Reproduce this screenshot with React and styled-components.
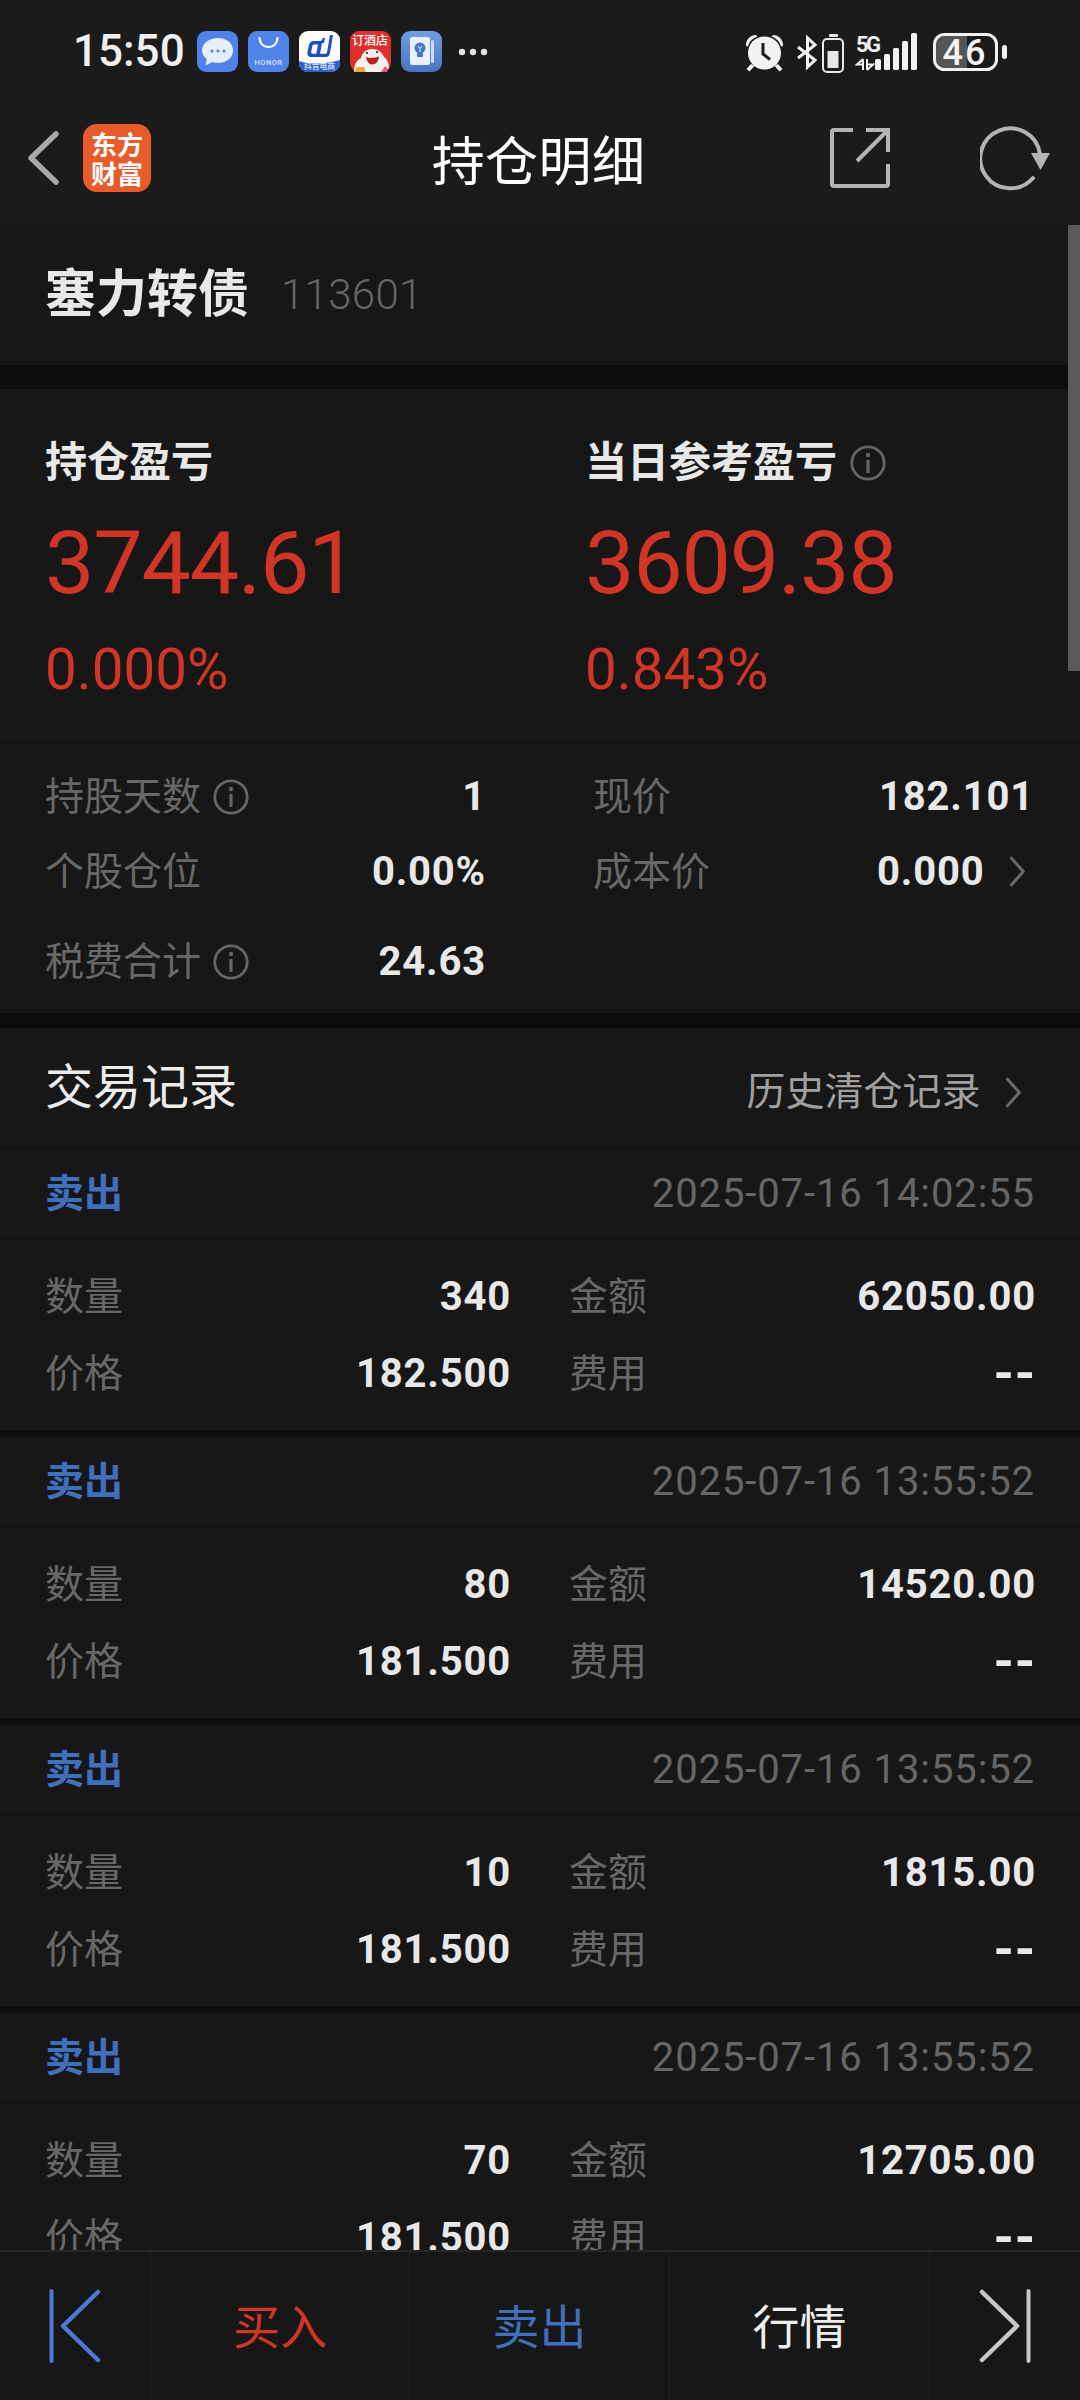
import React from 'react';
import styled, { createGlobalStyle } from 'styled-components';

const Global = createGlobalStyle`
  html, body { margin: 0; padding: 0; background: #171717; }
  * { box-sizing: border-box; }
`;

const sans = `Roboto, "Noto Sans CJK SC", sans-serif`;
const RED = '#d13526';
const BLUE = '#3f70bd';

const Page = styled.div`
  width: 1080px;
  height: 2400px;
  display: flex;
  flex-direction: column;
  overflow: hidden;
  background: #171717;
  font-family: ${sans};
`;

const StatusBar = styled.div`
  height: 102px;
  flex: none;
  display: flex;
  align-items: flex-start;
  justify-content: space-between;
  padding: 31px 72px 0 73px;
  background: #1b1b1b;
`;

const StatusGroup = styled.div`
  display: flex;
  align-items: center;
  height: 41px;
  gap: 10px;
`;

const Clock = styled.span`
  font-size: 44px;
  font-weight: 500;
  line-height: 41px;
  color: #efefef;
  width: 114px;
`;

const Dots = styled.span`
  display: flex;
  margin-left: 6px;
`;

const NavBar = styled.div`
  height: 123px;
  flex: none;
  display: grid;
  grid-template-columns: 1fr auto 1fr;
  align-items: center;
  padding: 0 30px 12px 27px;
  background: #1b1b1b;
`;

const NavLeft = styled.div`
  display: flex;
  align-items: center;
  gap: 24px;
`;

const Logo = styled.div`
  width: 68px;
  height: 68px;
  border-radius: 14px;
  background: #e85c2b;
  color: #fff;
  font-family: "Noto Sans CJK SC", sans-serif;
  font-weight: 700;
  font-size: 26px;
  line-height: 29px;
  text-align: center;
  padding-top: 5px;
`;

const NavTitle = styled.h1`
  margin: 0;
  font-size: 53px;
  font-weight: 400;
  color: #fff;
  font-family: "Noto Sans CJK SC", sans-serif;
  letter-spacing: 0.4px;
  line-height: 70px;
`;

const NavActions = styled.div`
  display: flex;
  align-items: center;
  justify-content: flex-end;
  gap: 90px;
`;

const Scroller = styled.div`
  flex: 1;
  min-height: 0;
  overflow: hidden;
  position: relative;
`;

const ScrollThumb = styled.div`
  position: absolute;
  top: 0;
  right: 0;
  width: 12px;
  height: 446px;
  background: #5a5a5a;
`;

const Band = styled.div`
  height: ${({ $h }) => $h}px;
  background: #0c0c0c;
`;

const StockHead = styled.div`
  height: 140px;
  display: flex;
  align-items: center;
  padding: 0 45px;
  gap: 32px;
`;

const StockName = styled.span`
  font-size: 51px;
  font-weight: 700;
  color: #e8e8e8;
  line-height: 60px;
`;

const StockCode = styled.span`
  font-size: 42px;
  font-weight: 300;
  color: #666;
  letter-spacing: 0.3px;
  line-height: 60px;
`;

const Profit = styled.div`
  display: grid;
  grid-template-columns: 540px 1fr;
  padding: 49px 0 42px 45px;
  border-bottom: 1px solid #0e0e0e;
`;

const ProfitLabel = styled.div`
  display: flex;
  align-items: center;
  gap: 13px;
  font-size: 42px;
  font-weight: 700;
  line-height: 50px;
  color: #e8e8e8;
`;

const ProfitValue = styled.div`
  margin-top: 25px;
  font-size: 88px;
  font-weight: 400;
  line-height: 100px;
  letter-spacing: -1.2px;
  color: ${RED};
`;

const ProfitPct = styled.div`
  margin-top: 27px;
  font-size: 56.5px;
  font-weight: 400;
  line-height: 60px;
  color: ${RED};
`;

const Stats = styled.div`
  padding: 16px 46px 14px 45px;
`;

const StatRow = styled.div`
  display: grid;
  grid-template-columns: 441px 441px;
  column-gap: 107px;
  height: 75px;
  margin-top: ${({ $mt }) => $mt || 0}px;
`;

const Cell = styled.div`
  display: flex;
  align-items: center;
  justify-content: space-between;
`;

const Label = styled.span`
  display: flex;
  align-items: center;
  gap: 12px;
  font-size: 39px;
  color: #686868;
  line-height: 50px;
`;

const Value = styled.span`
  display: flex;
  align-items: center;
  gap: 24px;
  font-size: ${({ $dash }) => ($dash ? 52 : 40)}px;
  font-weight: 700;
  color: #e8e8e8;
  letter-spacing: 0.8px;
  line-height: 50px;
`;

const ChevronBox = styled.span`
  display: flex;
  margin-right: 7px;
`;

const TradeHead = styled.div`
  height: 120px;
  display: flex;
  align-items: center;
  justify-content: space-between;
  padding: 0 50px 0 45px;
`;

const TradeTitle = styled.span`
  font-size: 48px;
  color: #ececec;
  line-height: 60px;
`;

const HistoryLink = styled.span`
  display: flex;
  align-items: center;
  gap: 24px;
  font-size: 39px;
  color: #a0a0a0;
  line-height: 60px;
  padding-top: 8px;
`;

const Card = styled.div`
  border-top: 1px solid #0e0e0e;
`;

const CardHead = styled.div`
  height: 90px;
  display: flex;
  align-items: center;
  justify-content: space-between;
  padding: 0 45px;
  border-bottom: 1px solid #0e0e0e;
`;

const Side = styled.span`
  font-size: 39px;
  font-weight: 700;
  color: ${BLUE};
  line-height: 50px;
  padding-top: 1px;
`;

const Stamp = styled.span`
  font-size: 40px;
  color: #666;
  line-height: 50px;
  letter-spacing: 0.9px;
`;

const CardBody = styled.div`
  padding: 19px 44px 18px 45px;
`;

const CardRow = styled.div`
  display: grid;
  grid-template-columns: 466px 467px;
  column-gap: 58px;
  height: 77px;
`;

const BottomBar = styled.div`
  height: 150px;
  flex: none;
  display: grid;
  grid-template-columns: 150px 259px 260px 260px 151px;
  background: #171717;
  border-top: 2px solid #262626;
`;

const BarItem = styled.div`
  display: flex;
  align-items: center;
  justify-content: center;
  font-size: 47px;
  padding-bottom: ${({ $icon }) => ($icon ? 0 : 5)}px;
  color: ${({ $color }) => $color || '#eee'};
  font-family: "Noto Sans CJK SC", sans-serif;
  border-left: ${({ $first }) => ($first ? 'none' : '1px solid #232323')};
`;

const Chevron = ({ size = 31 }) => (
  <ChevronBox>
    <svg width={size * 0.6} height={size} viewBox="0 0 18 31" fill="none">
      <path d="M3 2l12 13.500L3 29" stroke="#6a6a6a" strokeWidth="3" strokeLinecap="round" strokeLinejoin="round" />
    </svg>
  </ChevronBox>
);

const Info = ({ size = 36, color = '#666' }) => (
  <svg width={size} height={size} viewBox="0 0 36 36" fill="none">
    <circle cx="18" cy="18" r="16.200" stroke={color} strokeWidth="2.800" />
    <circle cx="18" cy="10" r="2.200" fill={color} />
    <rect x="16.400" y="15" width="3.200" height="13" fill={color} />
  </svg>
);

/* notification icons */
const ChatIcon = () => (
  <svg width="41" height="41" viewBox="0 0 41 41">
    <rect width="41" height="41" rx="9" fill="#4f82ea" />
    <path d="M21 7c8.500 0 15 5.200 15 12.500S29.500 32 21 32c-2 0-4-.3-5.700-.9L8.500 34.500l1.300-6.300C7 25.800 5 23 5 19.500 5 12.200 12.500 7 21 7z" fill="#e6eefc" />
    <circle cx="15" cy="20" r="1.600" fill="#5a88e0" />
    <circle cx="21" cy="20" r="1.600" fill="#5a88e0" />
    <circle cx="27" cy="20" r="1.600" fill="#5a88e0" />
  </svg>
);

const HonorIcon = () => (
  <svg width="41" height="41" viewBox="0 0 41 41">
    <rect width="41" height="41" rx="9" fill="#4f82ea" />
    <path d="M11.500 7c.6 6 4.300 9 9 9s8.400-3 9-9" fill="none" stroke="#fff" strokeWidth="2.200" strokeLinecap="round" />
    <text x="20.500" y="34" fontSize="7.500" fontWeight="500" letterSpacing="0.500" textAnchor="middle" fill="#dfe9fb" fontFamily="Roboto, sans-serif">HONOR</text>
  </svg>
);

const ShopIcon = () => (
  <svg width="41" height="41" viewBox="0 0 41 41">
    <rect width="41" height="41" rx="9" fill="#fff" />
    <path d="M0 30c13 4 28 3 41-1v3c0 5-4 9-9 9H9c-5 0-9-4-9-9z" fill="#2c62cf" />
    <path d="M24 7l-2 3h-7c-3 0-4.500 1.500-5 4l-1.500 7c-.6 3 1 5 4 5h14c2.500 0 4-1.500 4.500-4L34 4h-3l-3 17.500c-.2.800-.6 1.200-1.500 1.200H21L23 12h2l1-5z" fill="#1c50c4" />
    <path d="M19 13.500l-1.700 9.200h-3.500c-1.300 0-1.800-.7-1.600-2l1-5.200c.2-1.300.9-2 2-2z" fill="#fff" />
    <text x="20.500" y="38" fontSize="7.800" fontWeight="500" textAnchor="middle" fill="#e6eefc" fontFamily="Noto Sans CJK SC, sans-serif">抖音电商</text>
  </svg>
);

const HotelIcon = () => (
  <svg width="41" height="41" viewBox="0 0 41 41">
    <rect width="41" height="41" rx="9" fill="#dd2f2b" />
    <text x="20" y="14" fontSize="12" fontWeight="500" textAnchor="middle" fill="#fff" fontFamily="Noto Sans CJK SC, sans-serif">订酒店</text>
    <path d="M4 41c0-8 3-12 7-14 1-5 5-9 11-9 6 0 10 3 12 8 3 2 5 6 5 11l-3 4z" fill="#f6f1ef" />
    <path d="M16 26c4 1.200 8 1.200 13-.5-.5 5-3 8-6.500 8S17 31 16 26z" fill="#b8231e" />
    <path d="M4 41l3-5h7l2 5z" fill="#e9a93a" />
    <circle cx="17" cy="22" r="1.100" fill="#222" />
    <circle cx="27" cy="21" r="1.100" fill="#222" />
    <path d="M31 41l4-6 3 3-1 3z" fill="#e85a8a" />
  </svg>
);

const TipsIcon = () => (
  <svg width="41" height="41" viewBox="0 0 41 41">
    <defs>
      <linearGradient id="tipsBg" x1="0" y1="0" x2="0" y2="1">
        <stop offset="0" stopColor="#6f9fe6" />
        <stop offset="1" stopColor="#4a74c2" />
      </linearGradient>
    </defs>
    <rect width="41" height="41" rx="9" fill="url(#tipsBg)" />
    <rect x="30" y="9" width="3" height="23" rx="1.500" fill="#c9dcf6" />
    <rect x="9" y="6" width="20" height="28" rx="2.500" fill="#e8f0fb" />
    <circle cx="19" cy="17" r="5.500" fill="#4a78bf" />
    <rect x="16" y="22" width="6" height="4" rx="1" fill="#4a78bf" />
    <path d="M17 15l2 2.500 2-2.500M19 17.500V21" stroke="#e8f0fb" strokeWidth="1" fill="none" />
  </svg>
);

const MoreDots = () => (
  <svg width="30" height="8" viewBox="0 0 30 8">
    <circle cx="4" cy="4" r="3.200" fill="#e4e4e4" />
    <circle cx="15" cy="4" r="3.200" fill="#e4e4e4" />
    <circle cx="26" cy="4" r="3.200" fill="#e4e4e4" />
  </svg>
);

const SystemIcons = () => (
  <svg width="264" height="44" viewBox="745 30 264 44">
    {/* alarm */}
    <g fill="#f2f2f2">
      <circle cx="765.500" cy="52" r="16.500" />
      <path d="M747 45c-.5-6 4-11 10-11l1.500 1.800C754 37 750.500 40 749 45.500zM784 45c.5-6-4-11-10-11l-1.500 1.800c4.500 1.200 8 4.200 9.500 9.700z" />
      <path d="M752 63l3.500 2-5 5.500-3-2.500zM779 63l-3.500 2 5 5.500 3-2.500z" />
    </g>
    <path d="M764 42v11l7 5.500" fill="none" stroke="#1b1b1b" strokeWidth="3" />
    {/* bluetooth */}
    <path d="M799 46l17 13-7.500 7V37l7.500 7-17 13" fill="none" stroke="#f2f2f2" strokeWidth="3" />
    {/* small battery */}
    <rect x="830" y="33" width="9" height="3" rx="1" fill="#e8e8e8" />
    <rect x="824" y="38" width="20" height="33" rx="4" fill="none" stroke="#e8e8e8" strokeWidth="2" />
    <rect x="828.500" y="50" width="11" height="17" fill="#e8e8e8" />
    {/* signal */}
    <text x="857" y="51" fontSize="22" fontWeight="700" fill="#f2f2f2" fontFamily="Roboto, sans-serif" textLength="25">5G</text>
    <path d="M864 58v11M864 58l-6 5.500h6M868 69V58M868 69l6-5.500h-6" fill="none" stroke="#f2f2f2" strokeWidth="2" />
    <rect x="876" y="58" width="6" height="11" rx="1.500" fill="#f2f2f2" />
    <rect x="885" y="53" width="6" height="16" rx="1.500" fill="#f2f2f2" />
    <rect x="894" y="47" width="6" height="22" rx="1.500" fill="#f2f2f2" />
    <rect x="903" y="40" width="6" height="29" rx="1.500" fill="#f2f2f2" />
    <rect x="912" y="32" width="6" height="37" rx="1.500" fill="#f2f2f2" />
    {/* battery */}
    <path d="M968 35h-21c-6 0-10 4-10 9v14c0 5 4 9 10 9h21z" fill="#555" />
    <rect x="935.500" y="33.500" width="62" height="35" rx="10" fill="none" stroke="#f2f2f2" strokeWidth="3" />
    <rect x="1003" y="44" width="5" height="14" rx="2.500" fill="#f2f2f2" />
    <text x="966" y="64" fontSize="36" fontWeight="500" textAnchor="middle" fill="#f4f4f4" letterSpacing="2" fontFamily="Roboto, sans-serif">46</text>
  </svg>
);

const BackIcon = () => (
  <svg width="32" height="54" viewBox="0 0 32 54" fill="none">
    <path d="M29 3L4 27l25 24" stroke="#a9a9a9" strokeWidth="5.500" strokeLinecap="round" strokeLinejoin="round" />
  </svg>
);

const ShareIcon = () => (
  <svg width="60" height="60" viewBox="0 0 60 60" fill="none">
    <path d="M23 2H4a2 2 0 0 0-2 2v52a2 2 0 0 0 2 2h52a2 2 0 0 0 2-2V36" stroke="#b4b4b4" strokeWidth="4" />
    <path d="M27 33L56 4M36 2h22v22" stroke="#b4b4b4" strokeWidth="4" />
  </svg>
);

const RefreshIcon = () => (
  <svg width="70" height="66" viewBox="0 0 70 66" fill="none">
    <path d="M53 53A30 30 0 1 1 60 29" stroke="#b4b4b4" strokeWidth="4" strokeLinecap="round" />
    <path d="M51 28h19l-9.500 17z" fill="#b4b4b4" />
  </svg>
);

const EdgeLeft = () => (
  <svg width="52" height="74" viewBox="0 0 52 74" fill="none">
    <path d="M2.500 2v70" stroke="#4a7ad2" strokeWidth="4" strokeLinecap="round" />
    <path d="M49 3L14 37l35 34" stroke="#4a7ad2" strokeWidth="4.500" strokeLinecap="round" strokeLinejoin="round" />
  </svg>
);

const EdgeRight = () => (
  <svg width="52" height="74" viewBox="0 0 52 74" fill="none">
    <path d="M49.500 2v70" stroke="#c8c8c8" strokeWidth="4" strokeLinecap="round" />
    <path d="M3 3l35 34L3 71" stroke="#c8c8c8" strokeWidth="4.500" strokeLinecap="round" strokeLinejoin="round" />
  </svg>
);

const trades = [
  { time: '2025-07-16 14:02:55', qty: '340', amount: '62050.00', price: '182.500' },
  { time: '2025-07-16 13:55:52', qty: '80', amount: '14520.00', price: '181.500' },
  { time: '2025-07-16 13:55:52', qty: '10', amount: '1815.00', price: '181.500' },
  { time: '2025-07-16 13:55:52', qty: '70', amount: '12705.00', price: '181.500' },
];

const TradeCard = ({ time, qty, amount, price }) => (
  <Card>
    <CardHead>
      <Side>卖出</Side>
      <Stamp>{time}</Stamp>
    </CardHead>
    <CardBody>
      <CardRow>
        <Cell><Label>数量</Label><Value>{qty}</Value></Cell>
        <Cell><Label>金额</Label><Value>{amount}</Value></Cell>
      </CardRow>
      <CardRow>
        <Cell><Label>价格</Label><Value>{price}</Value></Cell>
        <Cell><Label>费用</Label><Value $dash>--</Value></Cell>
      </CardRow>
    </CardBody>
  </Card>
);

export default function App() {
  return (
    <Page>
      <Global />
      <StatusBar>
        <StatusGroup>
          <Clock>15:50</Clock>
          <ChatIcon />
          <HonorIcon />
          <ShopIcon />
          <HotelIcon />
          <TipsIcon />
          <Dots><MoreDots /></Dots>
        </StatusGroup>
        <SystemIcons />
      </StatusBar>

      <NavBar>
        <NavLeft>
          <BackIcon />
          <Logo>东方<br />财富</Logo>
        </NavLeft>
        <NavTitle>持仓明细</NavTitle>
        <NavActions>
          <ShareIcon />
          <RefreshIcon />
        </NavActions>
      </NavBar>

      <Scroller>
        <StockHead>
          <StockName>塞力转债</StockName>
          <StockCode>113601</StockCode>
        </StockHead>
        <Band $h={24} />
        <Profit>
          <div>
            <ProfitLabel>持仓盈亏</ProfitLabel>
            <ProfitValue>3744.61</ProfitValue>
            <ProfitPct>0.000%</ProfitPct>
          </div>
          <div>
            <ProfitLabel>当日参考盈亏 <Info /></ProfitLabel>
            <ProfitValue>3609.38</ProfitValue>
            <ProfitPct>0.843%</ProfitPct>
          </div>
        </Profit>
        <Stats>
          <StatRow>
            <Cell><Label>持股天数 <Info /></Label><Value>1</Value></Cell>
            <Cell><Label>现价</Label><Value>182.101</Value></Cell>
          </StatRow>
          <StatRow>
            <Cell><Label>个股仓位</Label><Value>0.00%</Value></Cell>
            <Cell><Label>成本价</Label><Value>0.000 <Chevron /></Value></Cell>
          </StatRow>
          <StatRow $mt={15}>
            <Cell><Label>税费合计 <Info /></Label><Value>24.63</Value></Cell>
          </StatRow>
        </Stats>
        <Band $h={15} />
        <TradeHead>
          <TradeTitle>交易记录</TradeTitle>
          <HistoryLink>历史清仓记录 <Chevron /></HistoryLink>
        </TradeHead>
        {trades.map((t, i) => (
          <React.Fragment key={i}>
            <TradeCard {...t} />
            <Band $h={6} />
          </React.Fragment>
        ))}
        <ScrollThumb />
      </Scroller>

      <BottomBar>
        <BarItem $first $icon><EdgeLeft /></BarItem>
        <BarItem $color={RED}>买入</BarItem>
        <BarItem $color={BLUE}>卖出</BarItem>
        <BarItem>行情</BarItem>
        <BarItem $icon><EdgeRight /></BarItem>
      </BottomBar>
    </Page>
  );
}
